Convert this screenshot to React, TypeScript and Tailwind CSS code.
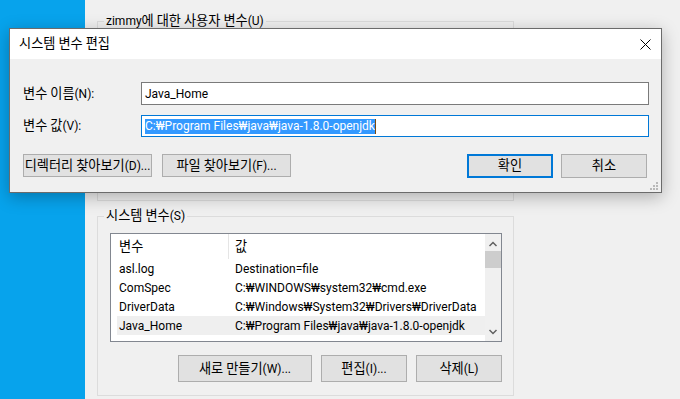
import React from "react";

const FONT = { fontFamily: '"Segoe UI", Roboto, "Noto Sans CJK KR", sans-serif' };

function K({ children }: { children: string }) {
  const parts = children.split(/([\uAC00-\uD7A3]+)/);
  return (
    <span>
      {parts.map((p, i) =>
        /[\uAC00-\uD7A3]/.test(p) ? (
          <span key={i} className="text-[13.2px] leading-none">
            {p}
          </span>
        ) : (
          <React.Fragment key={i}>{p}</React.Fragment>
        )
      )}
    </span>
  );
}

function GroupBox({ label, className, children }: { label: string; className?: string; children?: React.ReactNode }) {
  return (
    <div className={"relative border border-[#dcdcdc] " + (className ?? "")}>
      <span className="absolute left-[6px] top-[-9px] bg-[#f0f0f0] px-[2px] text-[12px] leading-[16px] text-black">
        <K>{label}</K>
      </span>
      {children}
    </div>
  );
}

function WinButton({ children, w, primary }: { children: string; w: string; primary?: boolean }) {
  return (
    <div
      className={
        "flex items-center justify-center whitespace-nowrap bg-[#e1e1e1] text-[12px] text-black " +
        w +
        (primary ? " border-2 border-[#0078d7]" : " border border-[#adadad]")
      }
    >
      <K>{children}</K>
    </div>
  );
}

const rows = [
  ["asl.log", "Destination=file"],
  ["ComSpec", "C:₩WINDOWS₩system32₩cmd.exe"],
  ["DriverData", "C:₩Windows₩System32₩Drivers₩DriverData"],
  ["Java_Home", "C:₩Program Files₩java₩java-1.8.0-openjdk"],
];

export default function App() {
  return (
    <div className="relative flex h-[399px] w-[680px] overflow-hidden bg-[#f0f0f0]" style={FONT}>
      {/* desktop */}
      <div className="h-full w-[85px] bg-[#07a3ec]" />
      {/* back window */}
      <div className="flex h-full flex-1 flex-col bg-[#f0f0f0] pl-[12px] pt-[21px]">
        <GroupBox label="zimmy에 대한 사용자 변수(U)" className="h-[180px] w-[417px]" />
        <GroupBox label="시스템 변수(S)" className="mt-[15px] h-[180px] w-[417px]">
          <div className="ml-[12px] mt-[16px] flex h-[109px] w-[392px] border border-[#828790] bg-white">
            <div className="flex flex-1 flex-col pl-[6px]">
              <div className="flex h-[25px] items-center text-[12px] text-black">
                <div className="flex h-full w-[111px] items-center pl-[2px]">
                  <K>변수</K>
                </div>
                <div className="h-full w-px bg-[#e5e5e5]" />
                <div className="pl-[6px]">
                  <K>값</K>
                </div>
              </div>
              {rows.map(([k, v], i) => (
                <div
                  key={k}
                  className={"flex h-[19px] items-center text-[12px] text-black " + (i === 3 ? "bg-[#efefef]" : "")}
                >
                  <div className="w-[112px] pl-[2px]">{k}</div>
                  <div className="whitespace-nowrap pl-[6px]">{v}</div>
                </div>
              ))}
            </div>
            <div className="flex w-[16px] flex-col items-center bg-[#f0f0f0]">
              <svg width="16" height="17" viewBox="0 0 16 17" className="shrink-0">
                <path d="M4.5 12 L8 8.5 L11.5 12" fill="none" stroke="#606060" strokeWidth="1.5" />
              </svg>
              <div className="h-[17px] w-[16px] bg-[#cdcdcd]" />
              <div className="flex-1" />
              <svg width="16" height="17" viewBox="0 0 16 17" className="shrink-0">
                <path d="M4.5 6 L8 9.5 L11.5 6" fill="none" stroke="#606060" strokeWidth="1.5" />
              </svg>
            </div>
          </div>
          <div className="mr-[11px] mt-[13px] flex justify-end gap-[9px]">
            <WinButton w="w-[134px] h-[27px]">새로 만들기(W)...</WinButton>
            <WinButton w="w-[86px] h-[27px]">편집(I)...</WinButton>
            <WinButton w="w-[86px] h-[27px]">삭제(L)</WinButton>
          </div>
        </GroupBox>
      </div>

      {/* front dialog */}
      <div className="absolute left-[9px] top-[28px] flex h-[165px] w-[653px] flex-col border border-[#6b6b6b] bg-[#f0f0f0] shadow-[0_4px_16px_rgba(0,0,0,0.28)]">
        <div className="flex h-[30px] items-center justify-between bg-white pl-[9px] pr-[10px]">
          <span className="text-[12px] text-black">
            <K>시스템 변수 편집</K>
          </span>
          <svg width="11" height="11" viewBox="0 0 11 11">
            <path d="M0.5 0.5 L10.5 10.5 M10.5 0.5 L0.5 10.5" stroke="#000" strokeWidth="1" />
          </svg>
        </div>
        <div className="relative flex flex-1 flex-col pl-[13px] pr-[12px] pt-[23px]">
          <div className="flex h-[23px] items-center">
            <div className="w-[118px] text-[12px] text-black">
              <K>변수 이름(N):</K>
            </div>
            <div className="flex h-[23px] flex-1 items-center border border-[#7a7a7a] bg-white pl-[3px] text-[12px] text-black">
              Java_Home
            </div>
          </div>
          <div className="mt-[10px] flex h-[22px] items-center">
            <div className="w-[118px] text-[12px] text-black">
              <K>변수 값(V):</K>
            </div>
            <div className="flex h-[22px] flex-1 items-center border border-[#0078d7] bg-white pl-[3px] text-[12px]">
              <span className="bg-[#3399ff] leading-[15px] text-white">C:₩Program Files₩java₩java-1.8.0-openjdk</span>
              <span className="h-[15px] w-px bg-[#7a4a10]" />
            </div>
          </div>
          <div className="mt-[17px] flex h-[23px] pr-[2px]">
            <WinButton w="w-[129px] h-[23px]">디렉터리 찾아보기(D)...</WinButton>
            <div className="w-[10px]" />
            <WinButton w="w-[129px] h-[23px]">파일 찾아보기(F)...</WinButton>
            <div className="flex-1" />
            <WinButton w="w-[86px] h-[24px]" primary>
              확인
            </WinButton>
            <div className="w-[8px]" />
            <WinButton w="w-[86px] h-[24px]">취소</WinButton>
          </div>
          <svg className="absolute bottom-[2px] right-[3px]" width="8" height="8" viewBox="0 0 8 8">
            <rect x="6" y="0" width="2" height="2" fill="#b8b8b8" />
            <rect x="3" y="3" width="2" height="2" fill="#b8b8b8" />
            <rect x="6" y="3" width="2" height="2" fill="#b8b8b8" />
            <rect x="0" y="6" width="2" height="2" fill="#b8b8b8" />
            <rect x="3" y="6" width="2" height="2" fill="#b8b8b8" />
            <rect x="6" y="6" width="2" height="2" fill="#b8b8b8" />
          </svg>
        </div>
      </div>
    </div>
  );
}
